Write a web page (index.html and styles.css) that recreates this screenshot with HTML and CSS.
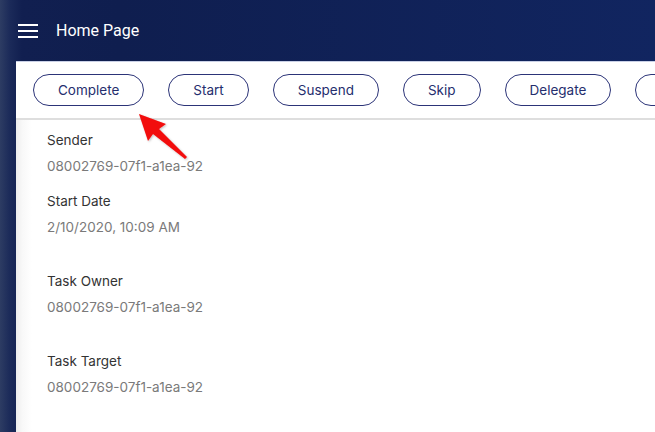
FILE: index.html
```html
<!DOCTYPE html>
<html lang="en">
<head>
<meta charset="utf-8">
<title>Home Page</title>
<link rel="stylesheet" href="styles.css">
</head>
<body>
<div class="app">
  <header class="topbar">
    <button class="menu-btn" aria-label="Menu">
      <svg width="20" height="14" viewBox="0 0 20 14"><rect x="0" y="0" width="20" height="2" fill="#fff"/><rect x="0" y="6" width="20" height="2" fill="#fff"/><rect x="0" y="12" width="20" height="2" fill="#fff"/></svg>
    </button>
    <span class="title">Home Page</span>
  </header>
  <main class="panel">
    <div class="toolbar">
      <button class="pill">Complete</button>
      <button class="pill">Start</button>
      <button class="pill">Suspend</button>
      <button class="pill">Skip</button>
      <button class="pill">Delegate</button>
      <button class="pill">Forward</button>
    </div>
    <div class="details">
      <div class="field">
        <div class="label">Sender</div>
        <div class="value">08002769-07f1-a1ea-92c3-4a1b2c3d4e5f</div>
      </div>
      <div class="field">
        <div class="label">Start Date</div>
        <div class="value">2/10/2020, 10:09 AM</div>
      </div>
      <div class="field field--spaced">
        <div class="label">Task Owner</div>
        <div class="value">08002769-07f1-a1ea-92c3-4a1b2c3d4e5f</div>
      </div>
      <div class="field field--spaced">
        <div class="label">Task Target</div>
        <div class="value">08002769-07f1-a1ea-92c3-4a1b2c3d4e5f</div>
      </div>
    </div>
    <svg class="pointer" width="60" height="60" viewBox="0 0 60 60">
      <defs><filter id="sh" x="-20%" y="-20%" width="140%" height="140%"><feDropShadow dx="1" dy="1" stdDeviation="1" flood-color="#000" flood-opacity="0.25"/></filter></defs>
      <polygon filter="url(#sh)" fill="#f20a0a" points="2,2 29,12 22,17 50,45 48,47 16,22 11,29"/>
    </svg>
  </main>
</div>
</body>
</html>
```
FILE: styles.css
```css
html, body {
  margin: 0;
  padding: 0;
  height: 100%;
}
body {
  font-family: Roboto, "Liberation Sans", sans-serif;
  background: linear-gradient(90deg, #2d3c63 0px, #1b2a59 10px, #111f50 22px, #0f1e4f 120px, #112560 100%);
  overflow: hidden;
}
.app {
  display: flex;
  flex-direction: column;
  height: 432px;
}
.topbar {
  height: 61px;
  flex-shrink: 0;
  display: flex;
  align-items: center;
  padding-left: 18px;
  box-sizing: border-box;
}
.menu-btn {
  background: none;
  border: 0;
  padding: 0;
  margin: 0 18px 0 0;
  width: 20px;
  height: 14px;
  display: flex;
  cursor: pointer;
}
.title {
  color: #ffffff;
  font-size: 16px;
  line-height: 20px;
}
.panel {
  position: relative;
  flex: 1;
  margin-left: 16px;
  background: linear-gradient(90deg, #ececec 0px, #f8f8f8 6px, #ffffff 16px);
  border-top: 1px solid #c9d0e6;
  overflow: hidden;
  font-family: Inter, Roboto, sans-serif;
}
.toolbar {
  display: flex;
  flex-wrap: nowrap;
  gap: 24px;
  padding: 12px 0 12px 17px;
  border-bottom: 2px solid #dedede;
  background: #fff;
}
.pill {
  flex-shrink: 0;
  height: 32px;
  padding: 0 24px;
  border: 1px solid #2c3478;
  border-radius: 16px;
  background: #fff;
  color: #252e6e;
  font-family: Inter, Roboto, sans-serif;
  font-size: 13.5px;
  white-space: nowrap;
}
.details {
  padding: 10px 0 0 31px;
}
.field {
  margin-top: 15px;
}
.field:first-child {
  margin-top: 0;
}
.field--spaced {
  margin-top: 34px;
}
.label {
  font-size: 13.5px;
  line-height: 20px;
  color: #333333;
}
.value {
  margin-top: 6px;
  width: 156px;
  overflow: hidden;
  white-space: nowrap;
  font-size: 13.5px;
  line-height: 20px;
  color: #7a7a7a;
}
.pointer {
  position: absolute;
  left: 121px;
  top: 50px;
}
```
